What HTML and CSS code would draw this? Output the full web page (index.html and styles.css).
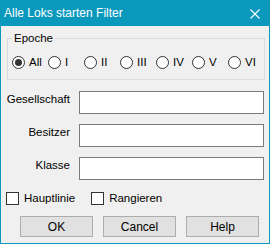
FILE: index.html
```html
<!DOCTYPE html>
<html lang="de">
<head>
    <meta charset="UTF-8">
    <title>Alle Loks starten Filter</title>
    <link rel="stylesheet" href="styles.css">
</head>
<body>
    <div class="window">
        <div class="titlebar">
            <span class="title">Alle Loks starten Filter</span>
            <span class="close">
                <svg width="10" height="10" viewBox="0 0 10 10">
                    <path d="M0.5 0.5 L9.5 9.5 M9.5 0.5 L0.5 9.5" stroke="#fff" stroke-width="1.1" fill="none"/>
                </svg>
            </span>
        </div>
        <div class="client">
            <fieldset class="group">
                <legend>Epoche</legend>
                <div class="radios">
                    <label class="opt"><input type="radio" name="epoche" checked>All</label>
                    <label class="opt"><input type="radio" name="epoche">I</label>
                    <label class="opt"><input type="radio" name="epoche">II</label>
                    <label class="opt"><input type="radio" name="epoche">III</label>
                    <label class="opt"><input type="radio" name="epoche">IV</label>
                    <label class="opt"><input type="radio" name="epoche">V</label>
                    <label class="opt"><input type="radio" name="epoche">VI</label>
                </div>
            </fieldset>

            <div class="fields">
                <label class="field-label">Gesellschaft</label>
                <input type="text" class="field">
                <label class="field-label">Besitzer</label>
                <input type="text" class="field">
                <label class="field-label">Klasse</label>
                <input type="text" class="field">
            </div>

            <div class="checks">
                <label class="check"><input type="checkbox">Hauptlinie</label>
                <label class="check"><input type="checkbox">Rangieren</label>
            </div>

            <div class="buttons">
                <button class="btn">OK</button>
                <button class="btn">Cancel</button>
                <button class="btn">Help</button>
            </div>
        </div>
    </div>
</body>
</html>
```

FILE: styles.css
```css
body {
    margin: 0;
    font-family: "Liberation Sans", Arial, sans-serif;
    font-size: 11.5px;
    color: #000;
    background: #f0f0f0;
}

.window {
    width: 270px;
    height: 244px;
    box-sizing: border-box;
    border: 1px solid #0a99bd;
    border-top: 0;
    background: #f0f0f0;
    display: flex;
    flex-direction: column;
}

.titlebar {
    height: 26px;
    margin: 0 -1px;
    background: #0a99bd;
    color: #fff;
    display: flex;
    align-items: center;
    justify-content: space-between;
    padding: 0 10px 0 4px;
}

.title {
    font-size: 12px;
    line-height: 14px;
}

.close {
    display: flex;
    width: 10px;
    height: 10px;
    margin-top: 1px;
}

.client {
    flex: 1;
    display: flex;
    flex-direction: column;
}

.group {
    margin: 5px 4px 0 6px;
    padding: 0 0 10px 4px;
    border: 1px solid #dcdcdc;
    min-width: 0;
}

.group legend {
    padding: 0 2px;
    line-height: 14px;
}

.radios {
    display: flex;
    margin-top: 11px;
    height: 13px;
    align-items: center;
}

.opt {
    width: 36.2px;
    display: flex;
    align-items: center;
    gap: 4px;
    line-height: 13px;
}

.opt input {
    appearance: none;
    margin: 0;
    width: 13px;
    height: 13px;
    border: 1px solid #333;
    border-radius: 50%;
    background: #fff;
    box-sizing: border-box;
    display: grid;
    place-content: center;
    flex: none;
}

.opt input:checked::before {
    content: "";
    width: 7px;
    height: 7px;
    border-radius: 50%;
    background: #333;
}

.fields {
    display: grid;
    grid-template-columns: 69px 185px;
    column-gap: 9px;
    row-gap: 10px;
    margin-top: 11px;
}

.field-label {
    text-align: right;
    padding-top: 1px;
    line-height: 14px;
}

.field {
    height: 23px;
    margin: 0;
    box-sizing: border-box;
    border: 1px solid #7a7a7a;
    background: #fff;
    padding: 0 3px;
    font: inherit;
}

.checks {
    display: flex;
    gap: 16px;
    margin: 12px 0 0 5px;
}

.check {
    display: flex;
    align-items: center;
    gap: 5px;
    line-height: 13px;
}

.check input {
    appearance: none;
    margin: 0;
    width: 13px;
    height: 13px;
    border: 1px solid #333;
    background: #fff;
    box-sizing: border-box;
}

.buttons {
    display: flex;
    gap: 10px;
    margin: 11px 0 0 19px;
}

.btn {
    width: 73px;
    height: 21px;
    margin: 0;
    padding: 0;
    border: 1px solid #adadad;
    background: #e1e1e1;
    font: inherit;
    font-size: 12px;
    color: #000;
}
```
